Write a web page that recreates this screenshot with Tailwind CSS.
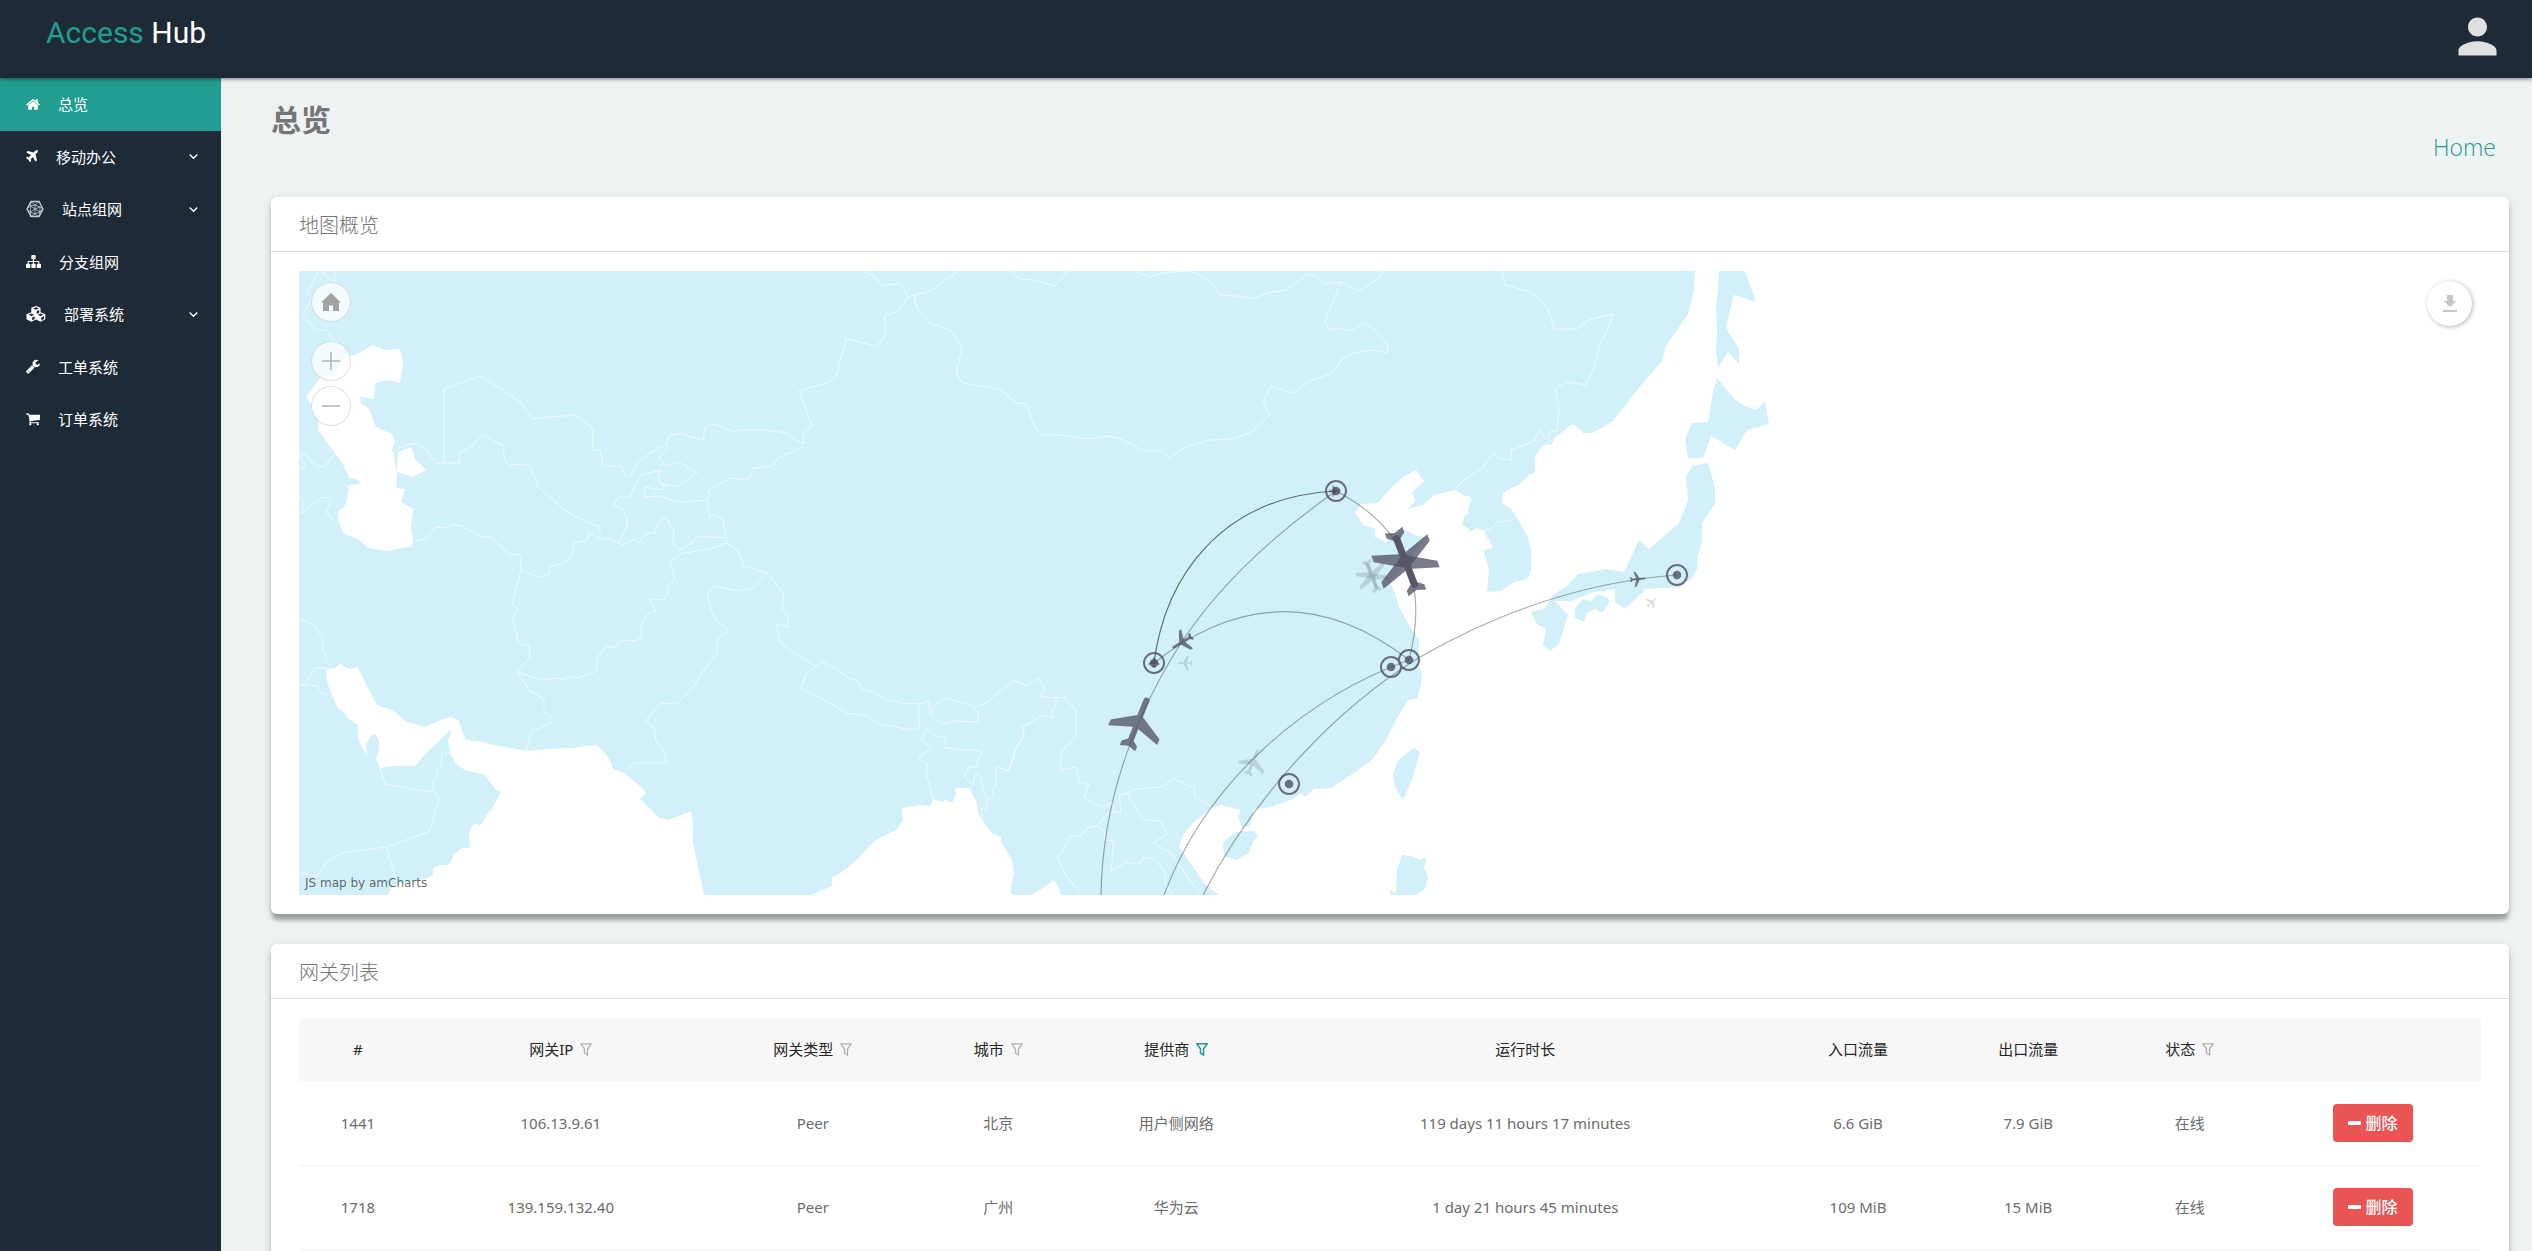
<!DOCTYPE html>
<html lang="zh-CN">
<head>
  <meta charset="UTF-8" />
  <meta name="viewport" content="width=device-width, initial-scale=1.0"/>
  <title>Access Hub</title>
  <script src="https://cdn.jsdelivr.net/npm/@tailwindcss/browser@4"></script>
</head>
<body class="bg-[#eef2f3] text-[#6c6c6c] text-[15px] font-['Noto_Sans','Noto_Sans_CJK_SC',sans-serif]">

  <div class="h-screen flex flex-col overflow-hidden">

    <!-- Top bar -->
    <header class="relative z-10 h-[78px] shrink-0 flex items-start justify-between bg-[#1e2b37] pl-[46px] pr-[26px] shadow-[0_1px_4px_rgba(0,0,0,0.5)]">
      <a href="#" class="pt-[13px] text-[30px] leading-[40px] font-['Roboto',sans-serif] text-white"><span class="text-[#219e91]">Access</span> Hub</a>
      <button type="button" aria-label="Account" class="pt-2">
        <svg class="w-[57px] h-[57px]" viewBox="0 0 24 24" fill="#e0e0e0"><path d="M12 12c2.210 0 4-1.790 4-4s-1.790-4-4-4-4 1.790-4 4 1.790 4 4 4zm0 2c-2.670 0-8 1.340-8 4v2h16v-2c0-2.660-5.330-4-8-4z"/></svg>
      </button>
    </header>

    <div class="flex flex-1 min-h-0">

      <!-- Sidebar -->
      <nav class="w-[221px] shrink-0 bg-[#1e2b37] text-white leading-normal">
        <a href="#" class="flex items-center gap-[18px] px-[26px] py-[15px] bg-[#219e91]">
          <svg class="w-[14px] h-[15px]" viewBox="64 0 1664 1792" fill="currentColor"><path d="M1472 992v480q0 26-19 45t-45 19h-384v-384h-256v384h-384q-26 0-45-19t-19-45v-480q0-1 .5-3t.5-3l575-474 575 474q1 2 1 6zm223-69l-62 74q-8 9-21 11h-3q-13 0-21-7l-692-577-692 577q-12 8-24 7-13-2-21-11l-62-74q-8-10-7-23.5t11-21.5l719-599q32-26 76-26t76 26l244 204v-195q0-14 9-23t23-9h192q14 0 23 9t9 23v408l219 182q10 8 11 21.500t-7 23.500z"/></svg>
          总览
        </a>
        <a href="#" class="flex items-center gap-[18px] px-[26px] py-[15px]">
          <svg class="w-3 h-[15px]" viewBox="192 128 1408 1536" fill="currentColor"><path d="M1568 160q44 52 12 148t-108 172l-161 161 160 696q5 19-12 33l-128 96q-7 6-19 6-4 0-7-1-15-3-21-16l-279-508-259 259 53 194q5 17-8 31l-96 96q-9 9-23 9h-2q-15-2-24-13l-189-252-252-189q-11-7-13-23-1-13 9-25l96-97q9-9 23-9 6 0 8 1l194 53 259-259-508-279q-14-8-17-24-2-16 9-27l128-128q14-13 30-8l665 159 160-160q76-76 172-108t148 12z"/></svg>
          移动办公
          <svg class="ml-auto -mr-[3px] w-[9px] h-[9px]" viewBox="0 0 9 9" fill="none" stroke="currentColor" stroke-width="1.300"><path d="M.7 2.500l3.800 3.800 3.800-3.800"/></svg>
        </a>
        <a href="#" class="flex items-center gap-[18px] px-[26px] py-[15px]">
          <svg class="w-[18px] h-[18px]" viewBox="0 0 18 18" fill="none" stroke="#c9ced2" stroke-width=".8"><path stroke-width="1.300" d="M5 1.500h8L17 9l-4 7.500H5L1 9z"/><path d="M5 1.500L9 5l4-3.500M9 5l5 2 3 2-3 3-1 4.500-4-2.500-4 2.500-.5-4.500L1 9l3.500-3L5 1.500M4.500 6L9 9l5-2M9 5v9M4.500 12L9 9l5 3M4.500 6v6M14 7v5M4.500 6L9 5M4.500 12L9 14l5-2"/></svg>
          站点组网
          <svg class="ml-auto -mr-[3px] w-[9px] h-[9px]" viewBox="0 0 9 9" fill="none" stroke="currentColor" stroke-width="1.300"><path d="M.7 2.500l3.800 3.800 3.800-3.800"/></svg>
        </a>
        <a href="#" class="flex items-center gap-[18px] px-[26px] py-[15px]">
          <svg class="w-[15px] h-[15px]" viewBox="0 0 1792 1792" fill="currentColor"><path d="M1792 1248v320q0 40-28 68t-68 28h-320q-40 0-68-28t-28-68v-320q0-40 28-68t68-28h96v-192h-512v192h96q40 0 68 28t28 68v320q0 40-28 68t-68 28h-320q-40 0-68-28t-28-68v-320q0-40 28-68t68-28h96v-192h-512v192h96q40 0 68 28t28 68v320q0 40-28 68t-68 28h-320q-40 0-68-28t-28-68v-320q0-40 28-68t68-28h96v-192q0-52 38-90t90-38h512v-192h-96q-40 0-68-28t-28-68v-320q0-40 28-68t68-28h320q40 0 68 28t28 68v320q0 40-28 68t-68 28h-96v192h512q52 0 90 38t38 90v192h96q40 0 68 28t28 68z"/></svg>
          分支组网
        </a>
        <a href="#" class="flex items-center gap-[18px] px-[26px] py-[15px]">
          <svg class="w-[20px] h-4" viewBox="0 0 20 16" fill="currentColor"><path d="M10 0l4.500 1.800v4.400l4.800 2v5L14.600 15.800 10 13.600 5.400 15.800.5 13.200v-5l4.800-2V1.800zM10 1.300L7.200 2.500 10 3.700l2.800-1.200zM10.700 5v2.900l2.500-1.200V3.900zM5.400 7.500L2.500 8.800l2.900 1.300 2.900-1.300zM6.100 11.400v2.900l2.600-1.200v-2.900zM14.600 7.500l-2.900 1.300 2.900 1.300 2.900-1.300zM15.300 11.400v2.900l2.700-1.300v-2.900z" fill-rule="evenodd"/></svg>
          部署系统
          <svg class="ml-auto -mr-[3px] w-[9px] h-[9px]" viewBox="0 0 9 9" fill="none" stroke="currentColor" stroke-width="1.300"><path d="M.7 2.500l3.800 3.800 3.800-3.800"/></svg>
        </a>
        <a href="#" class="flex items-center gap-[18px] px-[26px] py-[15px]">
          <svg class="w-[14px] h-[15px]" viewBox="64 64 1664 1728" fill="currentColor"><path d="M448 1472q0-26-19-45t-45-19-45 19-19 45 19 45 45 19 45-19 19-45zm644-420l-682 682q-37 37-90 37-52 0-91-37l-106-108q-38-36-38-90 0-53 38-91l681-681q39 98 114.500 173.500t173.500 114.500zm634-435q0 39-23 106-47 134-164.500 217.500t-258.500 83.500q-185 0-316.500-131.500t-131.500-316.500 131.500-316.500 316.500-131.500q58 0 121.500 16.500t107.500 46.500q16 11 16 28t-16 28l-293 169v224l193 107q5-3 79-48.500t135.500-81 70.500-35.500q15 0 23.500 10t8.500 25z"/></svg>
          工单系统
        </a>
        <a href="#" class="flex items-center gap-[18px] px-[26px] py-[15px]">
          <svg class="w-[14px] h-[15px]" viewBox="64 64 1664 1792" fill="currentColor"><path d="M704 1536q0 52-38 90t-90 38-90-38-38-90 38-90 90-38 90 38 38 90zm896 0q0 52-38 90t-90 38-90-38-38-90 38-90 90-38 90 38 38 90zm128-1088v512q0 24-16.500 42.500t-40.500 21.500l-1044 122q13 60 13 70 0 16-24 64h920q26 0 45 19t19 45-19 45-45 19h-1024q-26 0-45-19t-19-45q0-11 8-31.500t16-36 21.500-40 15.500-29.500l-177-823h-204q-26 0-45-19t-19-45 19-45 45-19h256q16 0 28.500 6.500t19.500 15.500 13 24.500 8 26 5.500 29.500 4.500 26h1201q26 0 45 19t19 45z"/></svg>
          订单系统
        </a>
      </nav>

      <!-- Content -->
      <main class="flex-1 min-w-0 pl-[50px] pr-[23px]">
        <div class="h-[119px] flex justify-between pt-[22px] pr-[13px]">
          <h1 class="text-[30px] leading-[40px] font-bold text-[#757575]">总览</h1>
          <a href="#" class="pt-[27px] text-[23px] leading-[40px] font-light font-['Open_Sans',sans-serif] text-[#219e91]">Home</a>
        </div>

        <!-- Map -->
        <section class="bg-white rounded-md shadow-[0_7px_4px_-1px_rgba(0,0,0,0.28),0_3px_10px_rgba(0,0,0,0.16)]">
          <h2 class="h-[55px] flex items-center pt-1 px-7 border-b border-[#dedede] text-[20px] font-light text-[#757575]">地图概览</h2>
          <div class="pt-[19px] pb-[19px] px-7">
            <div class="relative">
              <svg class="block w-full h-[624px]" viewBox="299 271 2182 624" preserveAspectRatio="xMinYMin slice">
                <defs>
                  <path id="plane" transform="translate(-162 -153)" d="m2,106h28l24,30h72l-44,-133h35l80,132h98c21,0 21,34 0,34l-98,0 -80,134h-35l43,-133h-71l-24,30h-28l15,-47"/>
                  <g id="pin">
                    <circle r="10" fill="none" stroke="#4d4861" stroke-width="2"/>
                    <circle r="4.300" fill="#4d4861"/>
                  </g>
                </defs>

                <!-- mainland -->
                <g fill="#d2f0fa">
                  <path d="M299 271H1695L1694 290 1688 314 1666 346 1662 361 1638 389 1612 422 1592 433 1583 433 1573 424 1554 438 1552 445 1545 444 1539 450 1535 458 1535 472 1529 475 1519 485 1509 489 1503 493 1502 503 1510 508 1516 516 1527 535 1531 549 1531 571 1527 579 1512 583 1501 591 1487 592 1489 569 1483 550 1493 548 1484 531 1477 528 1470 532 1469 529 1462 525 1465 515 1469 514 1468 510 1471 500 1471 497 1463 495 1455 490 1434 495 1423 505 1408 509 1415 501 1412 493 1424 481 1416 470 1403 477 1387 492 1378 503 1361 504 1355 513 1363 525 1375 529 1375 537 1386 542 1403 529 1417 536 1427 537 1390 583 1395 593 1399 607 1409 625 1419 640 1419 668 1422 672 1421 685 1417 699 1408 700 1396 720 1386 740 1372 760 1354 773 1331 788 1314 789 1305 797 1301 793 1293 799 1271 807 1254 809 1250 826 1242 827 1238 817 1241 810 1221 805 1211 808 1193 823 1183 835 1179 847 1191 864 1204 883 1219 895 1061 895 1059 888 1054 880 1046 886 1031 895 1013 895 1010 893 1014 873 1012 860 1001 842 1001 837 993 834 983 822 978 813 977 803 973 795 969 788 955 788 956 794 952 803 945 800 943 802 933 799 930 806 920 805 902 808 903 820 896 830 874 841 859 858 846 869 832 878 832 886 811 895 704 895 693 843 693 826 691 811 669 820 659 818 640 799 646 793 642 788 624 773 613 769 609 758 597 745 571 748 547 749 527 751 493 745 483 742 466 740 458 720 451 717 440 720 425 727 407 722 392 710 377 705 367 686 358 667 349 669 340 664 334 669 326 670 327 681 331 693 338 708 344 712 347 718 358 725 358 738 362 747 367 756 372 759 376 759 381 768 394 766 415 766 425 754 436 744 450 730 451 733 448 741 450 753 456 764 465 770 485 775 495 789 501 792 492 809 487 814 481 825 474 824 471 828 469 836 470 848 462 848 454 854 451 862 448 865 439 865 433 869 433 875 425 879 397 884 393 885 388 895 299 895z"/>
                  <path d="M367 756L366 744 371 736 375 734 379 740 379 749 376 759 372 759z"/>
                  <path d="M1719 271L1718 290 1716 305 1717 330 1716 351 1718 368 1728 352 1739 364 1739 349 1726 328 1734 295 1756 302 1745 271z"/>
                  <path d="M1717 378L1734 399 1745 406 1756 410 1765 402 1769 424 1747 430 1735 450 1711 436 1703 458 1688 458 1685 439 1692 423 1708 422 1713 392z"/>
                  <path d="M1692 466L1708 463 1715 487 1715 504 1702 523 1702 543 1697 558 1698 567 1692 578 1680 587 1646 589 1625 609 1615 602 1615 589 1590 593 1572 601 1555 601 1568 615 1559 644 1550 651 1543 645 1546 629 1537 624 1531 612 1545 608 1553 595 1567 586 1578 574 1607 569 1624 572 1639 540 1649 549 1679 523 1688 500 1686 477z"/>
                  <path d="M1575 608L1583 599 1591 601 1598 594 1608 598 1609 603 1602 613 1595 609 1587 613 1584 622 1575 618z"/>
                  <path d="M1414 748L1420 752 1412 780 1403 800 1395 787 1393 776 1397 762 1403 756z"/>
                  <path d="M1236 832L1254 831 1258 836 1252 843 1249 853 1236 860 1224 856 1223 843 1229 837z"/>
                  <path d="M1402 855L1411 856 1420 860 1425 857 1426 862 1424 867 1428 877 1425 889 1416 895 1390 895 1390 890 1396 893 1397 870z"/>
                </g>

                <!-- Caspian sea -->
                <g fill="#fff">
                  <path d="M373 345L385 350 400 349 403 362 400 383 387 380 375 383 374 399 360 397 361 403 369 409 376 427 392 434 395 442 392 449 397 472 396 488 405 489 401 502 413 509 411 528 413 540 412 546 389 551 368 548 358 539 344 534 338 520 338 511 344 507 347 500 349 485 361 484 357 479 349 478 343 464 318 430 319 417 306 397 321 377 335 372 343 358 355 355z"/>
                  <path d="M398 452L411 447 415 459 426 470 413 477 397 472z"/>
                </g>

                <!-- borders -->
                <g fill="none" stroke="#fff" stroke-width="1" stroke-opacity=".65" stroke-linejoin="round">
                  <path d="M318 271L307 294 312 298 303 315 316 330 327 330 335 342M321 271L334 282 335 271"/>
                  <path d="M444 463V389L481 376 519 401 533 419 549 417 576 415 593 429 592 450 600 450 603 466 621 466 626 476 631 476 637 462 658 448 666 445 669 436 679 433 703 440 705 428 714 424 734 432 740 430 764 430 787 433 795 440 804 443 803 432 812 426 799 391 827 383 836 377 846 339 876 346 885 336 885 315 898 312 908 297 901 283 882 286 875 277 864 271"/>
                  <path d="M908 297L914 295 930 291 959 271"/>
                  <path d="M914 295L918 311 930 323 952 331 962 349 956 373 962 383 999 389 1017 403 1026 404 1033 423 1041 435 1059 435 1088 439 1109 436 1123 440 1144 451 1162 451 1169 458 1186 447 1210 440 1233 439 1251 432 1270 415 1263 400 1271 387 1294 393 1310 381 1333 373 1342 359 1353 353 1374 350 1387 353 1388 345 1374 329 1363 323 1351 331 1337 328 1329 330 1325 321 1341 282"/>
                  <path d="M1011 271L1019 279 1034 280 1055 286 1068 271M1135 271L1150 277 1163 273 1185 271 1197 273 1212 284 1220 295 1236 296 1253 299 1267 293 1286 290 1308 274 1316 276 1325 284 1341 282 1360 291 1381 276 1381 271"/>
                  <path d="M1502 271L1505 285 1531 292 1548 308 1554 329 1577 329 1589 320 1613 314 1607 332 1600 342 1595 365 1586 385 1567 382 1555 389 1559 407 1557 431 1549 432 1550 443 1539 430 1534 441 1511 450 1512 460 1500 459 1493 453 1483 468 1466 478 1454 490"/>
                  <path d="M1483 531L1490 530 1497 522 1512 520 1516 516"/>
                  <path d="M666 445L669 447 658 459 668 466 679 462 697 473 678 486 660 484 658 480 661 470 641 475 630 497 618 497 614 505 624 510 628 524 619 543"/>
                  <path d="M666 484L662 490 645 487 644 497 660 496 677 502 707 500 710 494 708 491 721 483 731 478 748 480 754 468 772 466 778 458 801 448 804 443"/>
                  <path d="M707 500L710 517 714 515 723 519 724 528 727 543 739 552 744 566 767 573"/>
                  <path d="M726 538L699 536 690 544 679 550 673 543 674 529 670 528 670 522 663 518 657 524 655 533 645 534 639 543 635 539 623 545 619 543 610 539 600 539 588 533 587 540 574 543 571 558 564 563 551 566 548 575 537 577 521 570 520 555 509 554 492 538 480 536 464 527 453 524 446 528 436 527 427 538 413 542"/>
                  <path d="M393 454L398 448 415 443 425 448 436 464 444 463 460 463 459 453 471 447 482 435 503 445 505 461 510 465 526 464 531 468 538 487 566 511 580 519 600 527 600 539"/>
                  <path d="M299 452L306 455 317 466 323 467 334 455M299 454L305 466 303 468 299 467M299 497L303 499 303 512 299 513M303 512L321 498 327 497 331 502 326 512 335 522"/>
                  <path d="M727 543L712 548 681 554 670 562 675 579 667 587 668 592 664 600 650 599 656 611 647 615 641 626 641 637 636 641 629 640 618 642 616 647 606 647 597 657 597 671 578 678 568 676 565 680 557 678 542 680 517 672"/>
                  <path d="M521 570L512 605 518 608 512 618 516 630 518 643 529 646 530 657 517 672 530 691 544 699 544 713 552 717 552 723 531 732 526 751"/>
                  <path d="M767 573L753 588 737 591 714 586 707 594 713 615 718 622 729 630 717 640 717 653 703 671 693 687 677 704 661 703 645 721 654 728 656 741 663 749 667 763 634 763 624 773"/>
                  <path d="M767 573L784 594 782 608 788 617 788 627 776 624 781 643 795 654 816 666 822 662 835 668 849 678 858 681 862 689 873 692 885 699 902 703 920 704 929 701 930 714 937 703 947 698 960 702 966 703 973 707 985 704 999 692 1015 681 1027 686 1038 678 1045 689 1040 696 1056 698 1064 697 1076 711 1076 737 1062 751 1060 770 1076 767 1079 782 1089 785 1084 798 1101 807 1112 803"/>
                  <path d="M816 666L806 674 801 689 819 697 847 713 868 716 878 724 892 726 905 729 918 729 920 723 918 712 920 704M930 714L943 724 954 721 978 722 978 713 973 707"/>
                  <path d="M933 799L930 787 926 773 928 764 919 760 921 756 931 748 921 740 926 729 937 736 945 737 946 748 961 750 975 750 982 752 976 766 969 767 964 777 973 785 975 774 979 774 987 800 986 811 981 808 983 822"/>
                  <path d="M987 800L994 796 993 790 996 783 996 767 1008 771 1014 758 1015 749 1024 737 1024 726 1043 715 1053 718 1052 710 1056 705 1056 698"/>
                  <path d="M1000 768L1008 771 1012 760 1016 749 1023 736 1023 726"/>
                  <path d="M1112 803L1115 812 1121 813 1119 795 1127 793 1136 789 1161 787 1174 779 1195 788 1194 796 1211 806"/>
                  <path d="M1115 812L1107 814 1097 826 1087 828 1081 836 1070 836 1062 853 1057 856 1064 872 1079 892 1078 895M1097 826L1104 831 1105 840 1114 841 1111 871 1126 862 1132 864 1140 864 1143 858 1154 859 1165 872 1166 887 1173 895M1127 793L1143 820 1161 821 1167 834 1153 843 1171 853 1177 862 1195 887 1202 895"/>
                  <path d="M299 618L315 626 323 639 322 652 326 653 326 662 333 669 315 668 305 685 299 685M305 685L317 686 322 694 331 694"/>
                  <path d="M378 763L385 784 429 792 433 789 433 781 438 777 437 769 443 767 441 763 442 753 450 753M433 789L439 800 429 832 386 847 343 853 328 861 317 877 308 874 299 874M386 847L397 882"/>
                </g>

                <!-- plane shadows -->
                <g fill="#000" fill-opacity=".12">
                  <use href="#plane" transform="translate(1185 663) rotate(180) scale(.048)"/>
                  <use href="#plane" transform="translate(1253 762) rotate(-68) scale(.09)"/>
                  <use href="#plane" transform="translate(1372 577) rotate(-111) scale(.1)"/>
                  <use href="#plane" transform="translate(1372 575) rotate(69) scale(.1)"/>
                  <use href="#plane" transform="translate(1652 602) rotate(-42) scale(.042)"/>
                </g>

                <!-- routes -->
                <g fill="none" stroke="#000" stroke-opacity=".32" stroke-width="1.200">
                  <path stroke-opacity=".55" d="M1154 663C1165 578 1220 497 1336 491"/>
                  <path d="M1336 491Q1228 567 1176 651 1103 770 1101 895"/>
                  <path d="M1154 663Q1282 562 1409 660"/>
                  <path d="M1336 491Q1439 545 1409 660"/>
                  <path d="M1677 575Q1545 585 1420 657C1340 706 1257 790 1203 895"/>
                  <path d="M1409 660C1300 700 1205 785 1164 895"/>
                </g>

                <g opacity=".78">
                  <use href="#pin" x="1336" y="491"/>
                  <use href="#pin" x="1154" y="663"/>
                  <use href="#pin" x="1409" y="660"/>
                  <use href="#pin" x="1391" y="667"/>
                  <use href="#pin" x="1289" y="784"/>
                  <use href="#pin" x="1677" y="575"/>
                </g>

                <g fill="#4d4d61" fill-opacity=".75">
                  <use href="#plane" transform="translate(1138 722) rotate(-68) scale(.176)"/>
                  <use href="#plane" transform="translate(1406 563) rotate(-111) scale(.2)"/>
                  <use href="#plane" transform="translate(1405 560) rotate(69) scale(.2)"/>
                  <use href="#plane" transform="translate(1182 642) rotate(148) scale(.075)"/>
                  <use href="#plane" transform="translate(1638 579) rotate(-5) scale(.05)"/>
                  <use href="#plane" transform="translate(1335 491) scale(.036)"/>
                  <use href="#plane" transform="translate(1154 662) rotate(-90) scale(.036)"/>
                </g>
              </svg>

              <div class="absolute left-3 top-[11px] flex flex-col gap-[5px]">
                <button type="button" aria-label="Reset view" class="w-10 h-10 mb-[14px] rounded-full bg-white/70 border border-black/12 flex items-center justify-center">
                  <svg class="w-5 h-[18px]" viewBox="0 0 20 18" fill="#a3a3a3"><path d="M10 0L20 9.500H18V18H12V12.500H8V18H2V9.500H0z"/></svg>
                </button>
                <button type="button" aria-label="Zoom in" class="w-10 h-10 rounded-full bg-white/70 border border-black/12 flex items-center justify-center">
                  <svg class="w-[18px] h-[18px]" viewBox="0 0 18 18" stroke="#b3b3b3" stroke-width="1.500"><path d="M9 0V18M0 9H18"/></svg>
                </button>
                <button type="button" aria-label="Zoom out" class="w-10 h-10 rounded-full bg-white/70 border border-black/12 flex items-center justify-center">
                  <svg class="w-[18px] h-[18px]" viewBox="0 0 18 18" stroke="#b3b3b3" stroke-width="1.500"><path d="M0 9H18"/></svg>
                </button>
              </div>

              <button type="button" aria-label="Download" class="absolute right-[9px] top-[10px] w-[45px] h-[45px] rounded-full bg-white shadow-[1px_1px_4px_rgba(0,0,0,0.3)] flex items-center justify-center">
                <svg class="w-[14px] h-[17px]" viewBox="0 0 14 17" fill="#c6c6c6"><path d="M4 0H10V6H13.500L7 12 .5 6H4zM0 15H14V17H0z"/></svg>
              </button>

              <a href="#" class="absolute left-[6px] bottom-1 text-[12px] leading-4 text-black/60 font-['DejaVu_Sans',sans-serif]">JS map by amCharts</a>
            </div>
          </div>
        </section>

        <!-- Gateway list -->
        <section class="mt-[30px] bg-white rounded-md shadow-[0_7px_4px_-1px_rgba(0,0,0,0.28),0_3px_10px_rgba(0,0,0,0.16)]">
          <h2 class="h-[55px] flex items-center pt-1 px-7 border-b border-[#dedede] text-[20px] font-light text-[#757575]">网关列表</h2>
          <div class="pt-[19px] pb-7 px-7">
            <table class="w-full table-fixed text-center">
              <colgroup>
                <col class="w-[5.4%]"><col class="w-[13.2%]"><col class="w-[9.9%]"><col class="w-[7.1%]"><col class="w-[9.2%]"><col class="w-[22.8%]"><col class="w-[7.700%]"><col class="w-[7.900%]"><col class="w-[6.900%]"><col class="w-[9.9%]">
              </colgroup>
              <thead>
                <tr class="h-[63px] bg-[#f7f7f7] text-[#262626]">
                  <th scope="col" class="font-normal rounded-tl">#</th>
                  <th scope="col" class="font-normal"><span class="inline-flex items-center gap-[7px]">网关IP<svg class="w-3 h-[13px]" viewBox="0 0 12 13" fill="none" stroke="#b0b0b0" stroke-width="1.300"><path d="M.8.8H11.200L7.500 6V12L4.500 10V6z"/></svg></span></th>
                  <th scope="col" class="font-normal"><span class="inline-flex items-center gap-[7px]">网关类型<svg class="w-3 h-[13px]" viewBox="0 0 12 13" fill="none" stroke="#b0b0b0" stroke-width="1.300"><path d="M.8.8H11.200L7.500 6V12L4.500 10V6z"/></svg></span></th>
                  <th scope="col" class="font-normal"><span class="inline-flex items-center gap-[7px]">城市<svg class="w-3 h-[13px]" viewBox="0 0 12 13" fill="none" stroke="#b0b0b0" stroke-width="1.300"><path d="M.8.8H11.200L7.500 6V12L4.500 10V6z"/></svg></span></th>
                  <th scope="col" class="font-normal"><span class="inline-flex items-center gap-[7px]">提供商<svg class="w-3 h-[13px]" viewBox="0 0 12 13" fill="none" stroke="#219e91" stroke-width="1.500"><path d="M.8.8H11.200L7.500 6V12L4.500 10V6z"/></svg></span></th>
                  <th scope="col" class="font-normal">运行时长</th>
                  <th scope="col" class="font-normal">入口流量</th>
                  <th scope="col" class="font-normal">出口流量</th>
                  <th scope="col" class="font-normal"><span class="inline-flex items-center gap-[7px]">状态<svg class="w-3 h-[13px]" viewBox="0 0 12 13" fill="none" stroke="#b0b0b0" stroke-width="1.300"><path d="M.8.8H11.200L7.500 6V12L4.500 10V6z"/></svg></span></th>
                  <td class="rounded-tr"></td>
                </tr>
              </thead>
              <tbody>
                <tr class="h-[84px] border-b border-[#f2f2f2]">
                  <td>1441</td>
                  <td>106.13.9.61</td>
                  <td>Peer</td>
                  <td>北京</td>
                  <td>用户侧网络</td>
                  <td>119 days 11 hours 17 minutes</td>
                  <td>6.6 GiB</td>
                  <td>7.9 GiB</td>
                  <td>在线</td>
                  <td><button type="button" class="inline-flex items-center justify-center gap-1 w-20 h-[38px] rounded align-middle bg-[#e95455] text-white text-[16px] font-medium"><svg class="w-[13px] h-1" viewBox="0 0 13 4"><rect width="13" height="4" rx="1" fill="currentColor"/></svg>删除</button></td>
                </tr>
                <tr class="h-[84px] border-b border-[#f2f2f2]">
                  <td>1718</td>
                  <td>139.159.132.40</td>
                  <td>Peer</td>
                  <td>广州</td>
                  <td>华为云</td>
                  <td>1 day 21 hours 45 minutes</td>
                  <td>109 MiB</td>
                  <td>15 MiB</td>
                  <td>在线</td>
                  <td><button type="button" class="inline-flex items-center justify-center gap-1 w-20 h-[38px] rounded align-middle bg-[#e95455] text-white text-[16px] font-medium"><svg class="w-[13px] h-1" viewBox="0 0 13 4"><rect width="13" height="4" rx="1" fill="currentColor"/></svg>删除</button></td>
                </tr>
              </tbody>
            </table>
          </div>
        </section>
      </main>
    </div>
  </div>
</body>
</html>
